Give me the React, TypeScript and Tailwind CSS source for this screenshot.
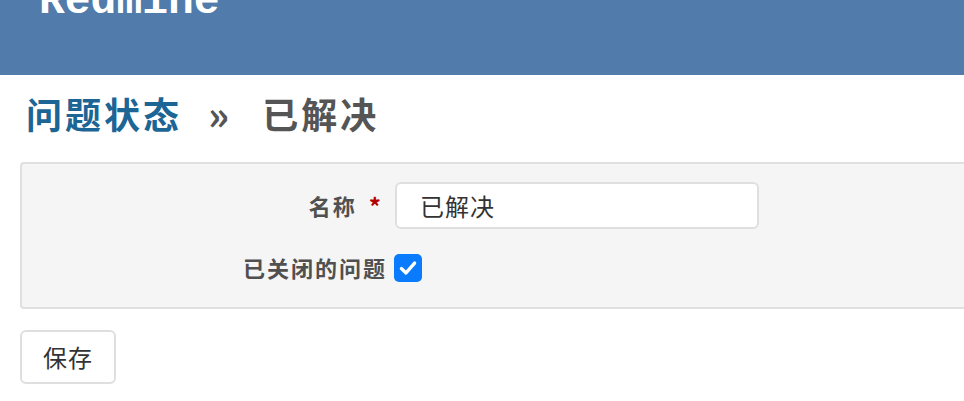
import React, { useState } from 'react';

const App: React.FC = () => {
  const [name, setName] = useState('已解决');
  const [isClosed, setIsClosed] = useState(true);

  const cjk = { fontFamily: '"Noto Sans CJK SC", "Noto Sans", sans-serif' };

  return (
    <div className="w-[964px] h-[401px] overflow-hidden bg-white" style={cjk}>
      {/* Header */}
      <div className="h-[75px] bg-[#507bab] overflow-hidden">
        <h1
          className="ml-[39px] -mt-[20px] text-[43px] leading-none font-bold text-white"
          style={{ fontFamily: '"Liberation Mono", "DejaVu Sans Mono", monospace' }}
        >
          Redmine
        </h1>
      </div>

      {/* Content */}
      <div className="pl-[20px]">
        <h2 className="mt-[14px] ml-[6px] flex items-center text-[36px] leading-[48px] font-bold tracking-[3px]">
          <a className="text-[#1c6595]">问题状态</a>
          <span className="ml-[26px] mr-[30px] text-[#555] text-[40px] leading-none">»</span>
          <span className="text-[#555]">已解决</span>
        </h2>

        <div className="mt-[25px] h-[147px] border-2 border-r-0 border-[#e0e0e0] rounded-l-[4px] bg-[#f5f5f5] pt-[18px]">
          <div className="flex items-center h-[47px]">
            <label className="w-[373px] pr-[12px] text-[22px] tracking-[2px] font-bold text-[#505050] flex justify-end items-center gap-[12px]">
              <span>名称</span>
              <span className="text-[#b30000] text-[24px] leading-none">*</span>
            </label>
            <input
              value={name}
              onChange={(e) => setName(e.target.value)}
              className="w-[364px] h-[47px] px-[23px] border-2 border-[#dfdfdf] rounded-[6px] bg-white text-[24px] tracking-[1px] text-[#333] outline-none"
            />
          </div>
          <div className="flex items-center mt-[22px]">
            <label className="w-[372px] text-right pr-[7px] text-[22px] tracking-[2px] font-bold text-[#505050]">
              已关闭的问题
            </label>
            <button
              type="button"
              onClick={() => setIsClosed(!isClosed)}
              className={`w-[28px] h-[28px] rounded-[5px] flex items-center justify-center ${isClosed ? 'bg-[#0b7bfe]' : 'bg-white border-2 border-[#999]'}`}
            >
              {isClosed && (
                <svg width="22" height="22" viewBox="0 0 20 20">
                  <path d="M4 10.5 L8.2 14.5 L16 5.5" fill="none" stroke="white" strokeWidth="3" strokeLinecap="round" strokeLinejoin="round" />
                </svg>
              )}
            </button>
          </div>
        </div>

        <button className="mt-[21px] w-[96px] h-[54px] border-2 border-[#dfdfdf] rounded-[6px] bg-white text-[24px] tracking-[1px] text-[#333]">
          保存
        </button>
      </div>
    </div>
  );
};

export default App;
